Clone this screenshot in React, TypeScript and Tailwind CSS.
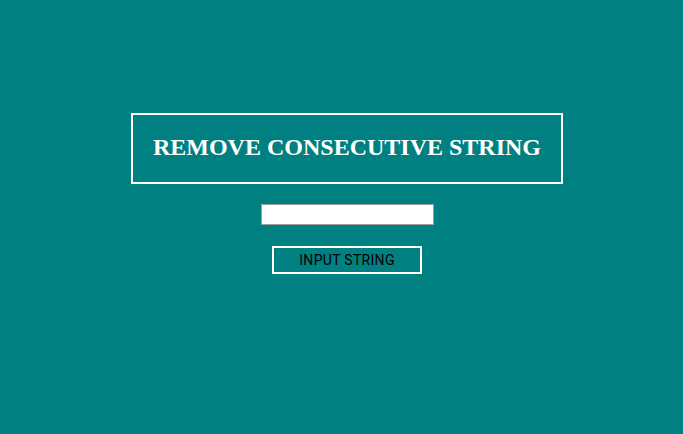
const App = () => {
  return (
    <div className="flex min-h-[434px] w-full flex-col items-center bg-[#008080] pt-[113px] pl-[11px]">
      <div className="flex h-[71px] w-[432px] items-center justify-center border-2 border-white pb-[3px]">
        <h1 className="font-['Liberation_Serif',serif] text-[24px] font-bold text-white">
          REMOVE CONSECUTIVE STRING
        </h1>
      </div>
      <input
        type="text"
        className="mt-[20px] h-[21px] w-[173px] border border-[#a0a0a0] bg-white px-1 text-[13px] outline-none"
      />
      <button className="mt-[21px] flex h-[28px] w-[150px] items-center justify-center border-2 border-white bg-transparent font-['Roboto',sans-serif] text-[14px] tracking-[0.3px] text-black">
        INPUT STRING
      </button>
    </div>
  );
};

export default App;
